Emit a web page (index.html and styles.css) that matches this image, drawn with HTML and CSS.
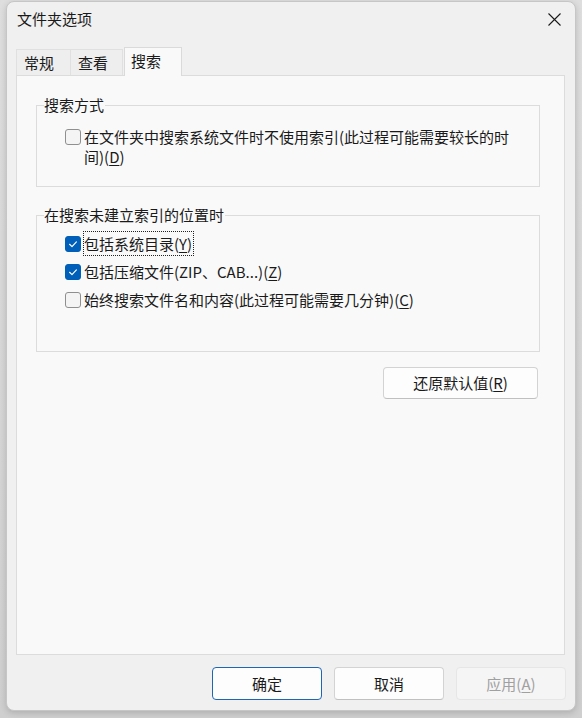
FILE: index.html
```html
<!DOCTYPE html>
<html lang="zh-CN">
<head>
<meta charset="utf-8">
<title>文件夹选项</title>
<link rel="stylesheet" href="styles.css">
</head>
<body>
<div class="window">
  <div class="titlebar">
    <span class="title">文件夹选项</span>
    <svg class="close" width="13" height="13" viewBox="0 0 13 13"><path d="M0.5 0.5 L12.5 12.5 M12.5 0.5 L0.5 12.5" stroke="#1a1a1a" stroke-width="1.1" fill="none"/></svg>
  </div>
  <div class="tabs">
    <div class="tab tab-general">常规</div>
    <div class="tab tab-view">查看</div>
    <div class="tab tab-search active">搜索</div>
  </div>
  <div class="panel">
    <fieldset class="group group-method">
      <legend>搜索方式</legend>
      <div class="option">
        <span class="box"></span>
        <div class="label">在文件夹中搜索系统文件时不使用索引(此过程可能需要较长的时<br>间)(<u>D</u>)</div>
      </div>
    </fieldset>
    <fieldset class="group group-unindexed">
      <legend>在搜索未建立索引的位置时</legend>
      <div class="options">
        <div class="option">
          <span class="box checked"><svg width="16" height="16" viewBox="0 0 16 16"><path d="M4.6 8.3 L7 10.6 L11.4 5.9" stroke="#fff" stroke-width="1.2" fill="none" stroke-linecap="round" stroke-linejoin="round"/></svg></span>
          <div class="label"><span class="text focus">包括系统目录(<u>Y</u>)</span></div>
        </div>
        <div class="option">
          <span class="box checked"><svg width="16" height="16" viewBox="0 0 16 16"><path d="M4.6 8.3 L7 10.6 L11.4 5.9" stroke="#fff" stroke-width="1.2" fill="none" stroke-linecap="round" stroke-linejoin="round"/></svg></span>
          <div class="label"><span class="text">包括压缩文件(ZIP、CAB...)(<u>Z</u>)</span></div>
        </div>
        <div class="option">
          <span class="box"></span>
          <div class="label"><span class="text">始终搜索文件名和内容(此过程可能需要几分钟)(<u>C</u>)</span></div>
        </div>
      </div>
    </fieldset>
    <div class="reset-row">
      <button class="btn reset">还原默认值(<u>R</u>)</button>
    </div>
  </div>
  <div class="footer">
    <button class="btn default">确定</button>
    <button class="btn">取消</button>
    <button class="btn" disabled>应用(<u>A</u>)</button>
  </div>
</div>
</body>
</html>
```
FILE: styles.css
```css
html, body {
  margin: 0;
  height: 100%;
}
body {
  background: linear-gradient(#dedede, #cfcfcf);
  font-family: "Noto Sans CJK SC", "Noto Sans", sans-serif;
  font-size: 15px;
  color: #1a1a1a;
  overflow: hidden;
}
.window {
  box-sizing: border-box;
  margin: 1px 0 0 6px;
  width: 570px;
  height: 710px;
  border: 1px solid #c6c6c6;
  border-radius: 8px;
  background: #f0f0f0;
  display: flex;
  flex-direction: column;
  box-shadow: 0 2px 6px rgba(0, 0, 0, 0.16);
}
.titlebar {
  box-sizing: border-box;
  height: 45px;
  flex: none;
  display: flex;
  justify-content: space-between;
  align-items: flex-start;
  padding: 7px 14px 0 10px;
}
.title {
  font-size: 15px;
  line-height: 19px;
}
.close {
  margin-top: 4px;
  display: block;
}
.tabs {
  height: 28px;
  flex: none;
  display: flex;
  align-items: flex-end;
  padding-left: 9px;
}
.tab {
  box-sizing: border-box;
  height: 26px;
  padding: 2px 0 0 7px;
  line-height: 22px;
  border: 1px solid #e0e0e0;
  border-bottom: none;
  background: #eeeeee;
}
.tab-general {
  width: 55px;
}
.tab-view {
  width: 52px;
  border-left: none;
}
.tab.active {
  position: relative;
  z-index: 1;
  width: 58px;
  height: 29px;
  margin-left: 1px;
  margin-bottom: -1px;
  padding-left: 6px;
  background: #f9f9f9;
  border-color: #dadada;
}
.panel {
  box-sizing: border-box;
  flex: 1;
  margin: 0 10px 0 9px;
  padding: 19px 24px 0 19px;
  border: 1px solid #dcdcdc;
  background: #f9f9f9;
}
.group {
  margin: 0;
  min-width: 0;
  border: 1px solid #dcdcdc;
  padding: 0 0 19px 0;
}
.group legend {
  margin-left: 7px;
  padding: 0 1px 0 0;
  line-height: 20px;
}
.group-method {
  padding-top: 12px;
}
.group-unindexed {
  margin-top: 18px;
  padding-top: 9px;
  padding-bottom: 41px;
}
.options {
  display: flex;
  flex-direction: column;
  gap: 8px;
}
.option {
  display: flex;
  align-items: flex-start;
  padding: 0 8px 0 28px;
}
.box {
  box-sizing: border-box;
  flex: none;
  width: 16px;
  height: 16px;
  margin: 2px 3px 0 0;
  border: 1px solid #8f8f8f;
  border-radius: 3px;
  background: #f4f4f4;
}
.box svg {
  display: block;
  margin: -1px;
}
.box.checked {
  border-color: #005fb8;
  background: #005fb8;
}
.label {
  line-height: 20px;
}
.label .text {
  border: 1px dotted transparent;
  margin-left: -1px;
  padding: 1px 1px 1px 0;
}
.label .text.focus {
  border-color: #222;
}
u {
  text-underline-offset: 2px;
}
.reset-row {
  display: flex;
  justify-content: flex-end;
  margin-top: 15px;
  padding-right: 2px;
}
.btn {
  box-sizing: border-box;
  font-family: inherit;
  font-size: 15px;
  color: #1a1a1a;
  background: #fdfdfd;
  border: 1px solid #d3d3d3;
  border-bottom-color: #c0c0c0;
  border-radius: 4px;
  padding: 0;
  line-height: 20px;
}
.reset {
  width: 155px;
  height: 32px;
}
.footer {
  flex: none;
  height: 33px;
  margin: 12px 0 10px 0;
  padding-right: 9px;
  display: flex;
  justify-content: flex-end;
  gap: 12px;
}
.footer .btn {
  width: 110px;
  height: 33px;
}
.btn.default {
  border: 1px solid #1e66b4;
  background: #fdfdfd;
}
.btn:disabled {
  background: #f5f5f5;
  border-color: #e6e6e6;
  color: #a0a0a0;
}
```
